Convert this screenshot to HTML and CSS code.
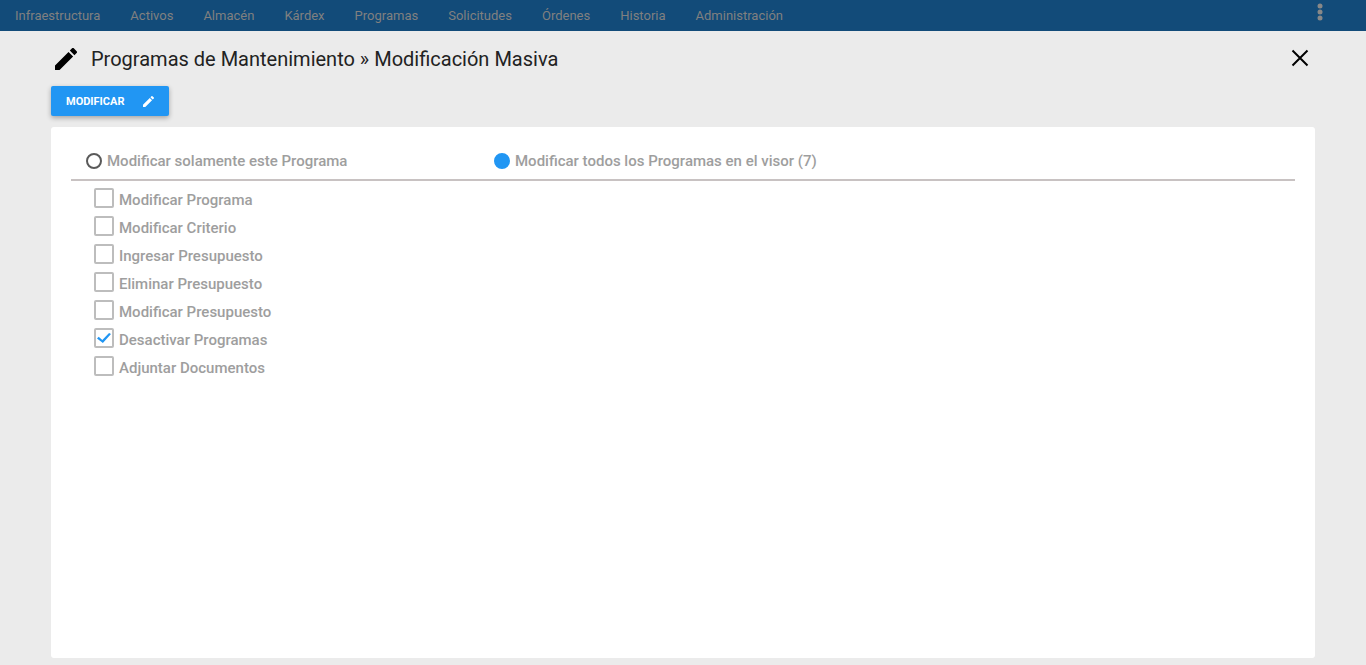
FILE: index.html
```html
<!DOCTYPE html>
<html lang="es">
<head>
<meta charset="UTF-8">
<meta name="viewport" content="width=device-width, initial-scale=1.0">
<title>Programas de Mantenimiento</title>
<link rel="stylesheet" href="styles.css">
</head>
<body>
<nav class="navbar">
	<a href="#">Infraestructura</a>
	<a href="#">Activos</a>
	<a href="#">Almacén</a>
	<a href="#">Kárdex</a>
	<a href="#">Programas</a>
	<a href="#">Solicitudes</a>
	<a href="#">Órdenes</a>
	<a href="#">Historia</a>
	<a href="#">Administración</a>
	<button type="button" class="more" aria-label="Más opciones">
		<svg width="6" height="18" viewBox="0 0 6 18"><circle cx="3" cy="3" r="2.5"/><circle cx="3" cy="9" r="2.5"/><circle cx="3" cy="15" r="2.5"/></svg>
	</button>
</nav>

<main class="page">
	<header class="title">
		<svg class="pencil" viewBox="3 3 18 18"><path d="M3 17.25V21h3.75L17.81 9.94l-3.75-3.75L3 17.25zM20.71 7.04c.39-.39.39-1.02 0-1.41l-2.34-2.34c-.39-.39-1.02-.39-1.41 0l-1.83 1.83 3.75 3.75 1.83-1.83z"/></svg>
		<h1>Programas de Mantenimiento » Modificación Masiva</h1>
		<button type="button" class="close" aria-label="Cerrar">
			<svg width="18" height="20" viewBox="0 0 18 20"><path d="M1.5 1.5l15 15M16.5 1.5l-15 15"/></svg>
		</button>
	</header>

	<button type="submit" form="masiva" class="btn">
		MODIFICAR
		<svg class="pencil" viewBox="3 3 18 18"><path d="M3 17.25V21h3.75L17.81 9.94l-3.75-3.75L3 17.25zM20.71 7.04c.39-.39.39-1.02 0-1.41l-2.34-2.34c-.39-.39-1.02-.39-1.41 0l-1.83 1.83 3.75 3.75 1.83-1.83z"/></svg>
	</button>

	<form id="masiva" class="panel">
		<div class="scope">
			<label><input type="radio" name="scope">Modificar solamente este Programa</label>
			<label><input type="radio" name="scope" checked>Modificar todos los Programas en el visor (7)</label>
		</div>
		<div class="options">
			<label><input type="checkbox"><span>Modificar Programa</span></label>
			<label><input type="checkbox"><span>Modificar Criterio</span></label>
			<label><input type="checkbox"><span>Ingresar Presupuesto</span></label>
			<label><input type="checkbox"><span>Eliminar Presupuesto</span></label>
			<label><input type="checkbox"><span>Modificar Presupuesto</span></label>
			<label><input type="checkbox" checked><span>Desactivar Programas</span></label>
			<label><input type="checkbox"><span>Adjuntar Documentos</span></label>
		</div>
	</form>
</main>
</body>
</html>
```
FILE: styles.css
```css
* {
	box-sizing: border-box;
}

body {
	display: flex;
	flex-direction: column;
	min-height: 100vh;
	margin: 0;
	background: #ebebeb;
	color: #000;
	font-family: Roboto, "Liberation Sans", sans-serif;
}

button {
	border: none;
	background: none;
	padding: 0;
	font-family: inherit;
	cursor: pointer;
}

svg {
	display: block;
}

.navbar {
	display: flex;
	align-items: center;
	gap: 30px;
	height: 31px;
	padding: 0 43px 0 15px;
	background: #124b79;
}

.navbar a {
	color: #808080;
	font-size: 13px;
	text-decoration: none;
}

.more {
	align-self: flex-start;
	margin-top: 3px;
	margin-left: auto;
}

.more svg {
	fill: #888;
}

.page {
	display: flex;
	flex: 1;
	flex-direction: column;
	padding: 0 51px 7px;
}

.title {
	display: flex;
	align-items: center;
	height: 55px;
	padding: 0 6px 0 4px;
}

.title .pencil {
	width: 22px;
	height: 22px;
}

h1 {
	margin: 0 0 0 14px;
	color: #222;
	font-size: 20px;
	font-weight: 400;
}

.close {
	margin-left: auto;
}

.close svg {
	fill: none;
	stroke: #000;
	stroke-width: 2;
}

.btn {
	display: flex;
	align-items: center;
	justify-content: space-between;
	align-self: flex-start;
	width: 118px;
	height: 30px;
	padding: 0 15px;
	border-radius: 2px;
	background: #2196f3;
	box-shadow: 0 2px 5px rgba(0, 0, 0, .3);
	color: #fff;
	font-size: 11px;
	font-weight: 700;
}

.btn .pencil {
	width: 11px;
	height: 11px;
	fill: #fff;
}

.panel {
	flex: 1;
	margin-top: 11px;
	padding: 20px;
	border-radius: 3px;
	background: #fff;
	color: #9e9e9e;
	font-size: 15px;
	font-weight: 500;
}

.scope {
	display: grid;
	grid-template-columns: repeat(3, 1fr);
	height: 34px;
	border-bottom: 2px solid #c8c2c2;
}

.scope label {
	display: flex;
	align-items: center;
	gap: 5px;
	height: 28px;
	padding-left: 15px;
}

input {
	appearance: none;
	flex: none;
	margin: 0;
}

[type="radio"] {
	width: 16px;
	height: 16px;
	border: 2px solid #5a5a5a;
	border-radius: 50%;
}

[type="radio"]:checked {
	border-color: #2196f3;
	background: #2196f3;
}

.options {
	display: flex;
	flex-direction: column;
	gap: 8px;
	padding: 7px 23px;
}

.options label {
	display: flex;
	gap: 5px;
	align-self: flex-start;
	height: 20px;
	line-height: 24px;
}

[type="checkbox"] {
	display: grid;
	place-items: center;
	width: 20px;
	height: 20px;
	border: 2px solid #bdbdbd;
	border-radius: 2px;
}

[type="checkbox"]:checked::before {
	content: "";
	width: 14px;
	height: 10px;
	background: #2196f3;
	clip-path: polygon(0 54%, 12% 38%, 38% 70%, 86% 0, 100% 10%, 42% 100%);
}
```
